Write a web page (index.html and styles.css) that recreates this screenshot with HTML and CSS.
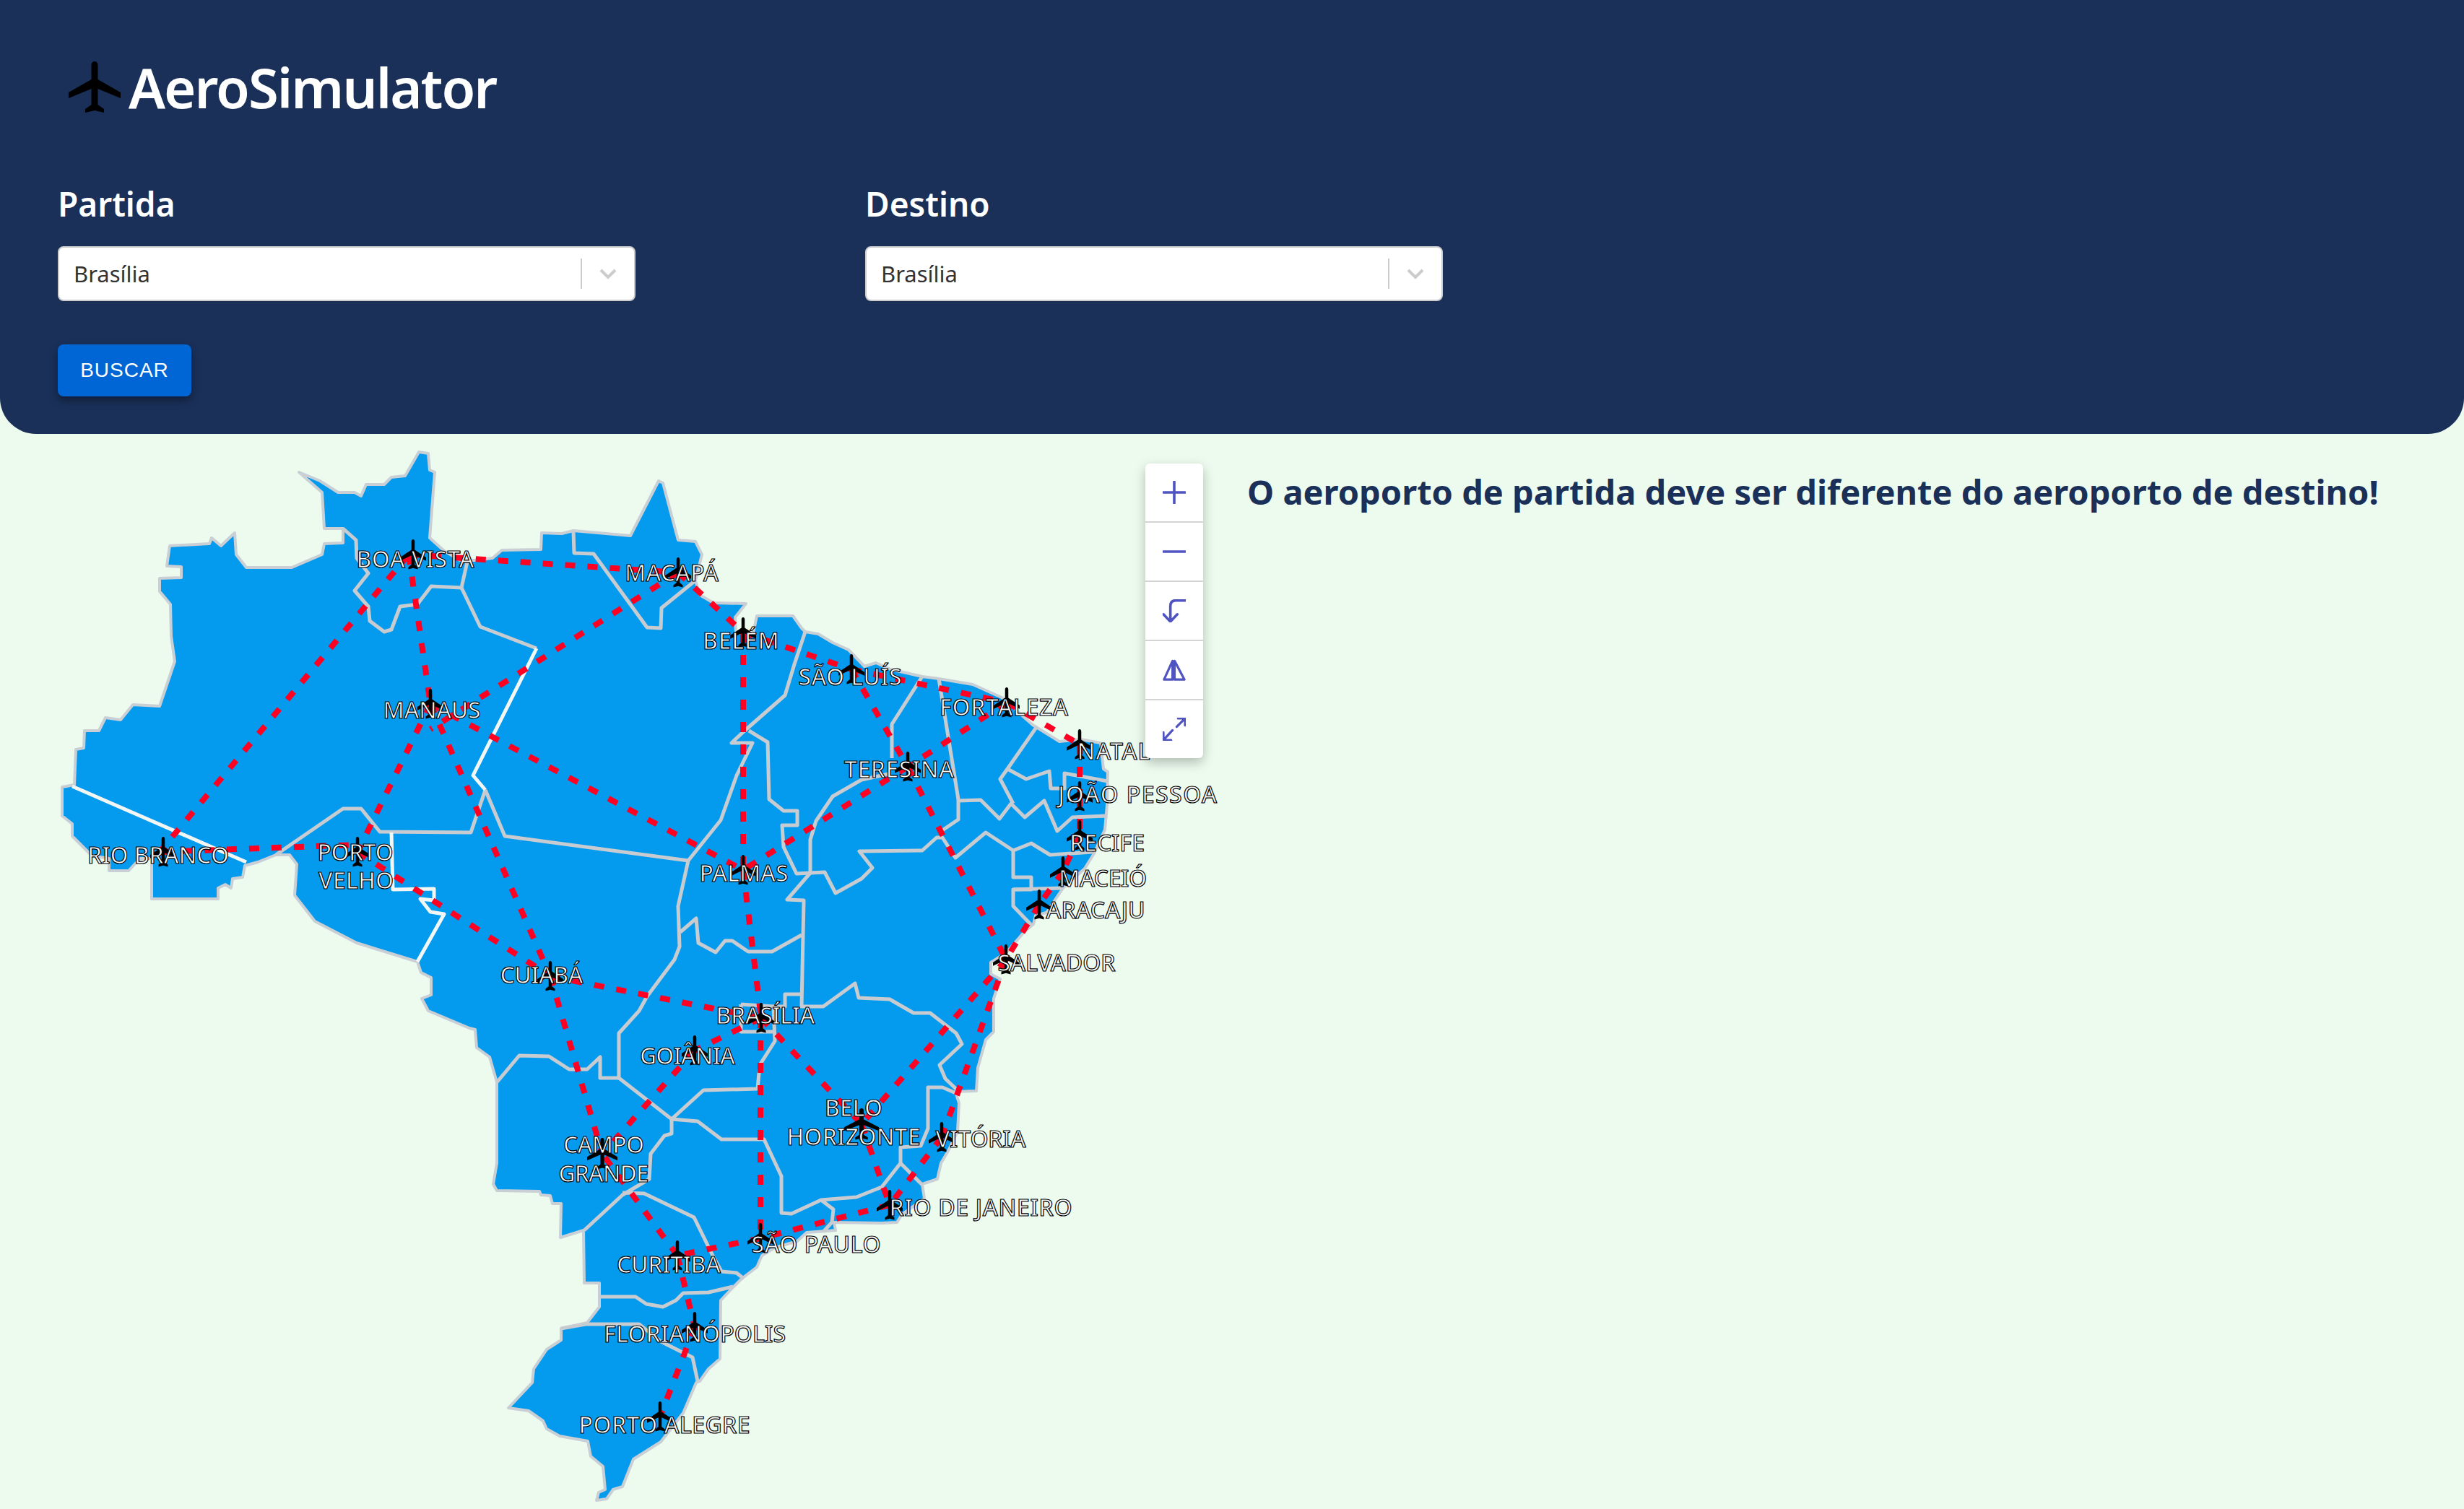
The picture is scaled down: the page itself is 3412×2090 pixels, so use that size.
FILE: index.html
```html
<!DOCTYPE html>
<html lang="pt-BR">

<head>
    <meta charset="UTF-8">
    <meta name="viewport" content="width=device-width, initial-scale=1.0">
    <title>AeroSimulator</title>
    <link rel="stylesheet" href="styles.css">
</head>

<body>

    <svg class="defs" aria-hidden="true">
        <symbol id="plane" viewBox="0 0 72 72" preserveAspectRatio="none">
            <path d="M36 0C38.5 0 40.5 2 40.5 5V25L72 43V51L40.5 38V60L49 66V71L36 68L23 71V66L31.5 60V38L0 51V43L31.5 25V5C31.5 2 33.5 0 36 0Z" />
        </symbol>
    </svg>

    <header class="topo">
        <div class="marca">
            <svg class="marca-icone"><use href="#plane" /></svg>
            <h1 class="marca-nome">AeroSimulator</h1>
        </div>

        <form class="rota">
            <div class="campo">
                <label class="campo-nome">Partida</label>
                <div class="select">
                    <span class="select-valor">Brasília</span>
                    <span class="select-seta">
                        <svg viewBox="0 0 24 16"><path d="M2 3L12 13L22 3" /></svg>
                    </span>
                </div>
            </div>
            <div class="campo">
                <label class="campo-nome">Destino</label>
                <div class="select">
                    <span class="select-valor">Brasília</span>
                    <span class="select-seta">
                        <svg viewBox="0 0 24 16"><path d="M2 3L12 13L22 3" /></svg>
                    </span>
                </div>
            </div>
        </form>

        <button class="buscar" type="button">BUSCAR</button>
    </header>

    <main class="conteudo">
        <div class="mapa">
            <svg class="mapa-svg" viewBox="0 601 1720 1489">
                <!-- contorno do pais -->
                <path class="pais" d="M414 654L443 666L468 682L491 682L500 687L507 671L532 671L542 661L561 659L580 626L593 628L595 651L602 654L595 745L615 763L637 776L660 776L682 773L695 762L749 761L750 738L778 739L794 735L873 742L912 666L918 669L939 748L963 750L972 768L963 804L969 824L988 835L1033 836L1018 855L1019 877L1043 877L1048 853L1098 853L1110 870L1115 875L1133 878L1153 890L1175 900L1197 923L1213 918L1233 927L1277 937L1300 940L1347 948L1387 966L1430 1004L1467 1027L1496 1024L1524 1029L1528 1065L1534 1069L1533 1115L1530 1149L1515 1182L1502 1203L1472 1230L1449 1264L1434 1268L1431 1280L1418 1291L1393 1320L1372 1333L1372 1349L1385 1356L1376 1383L1376 1429L1365 1440L1354 1479L1352 1511L1323 1512L1328 1528L1326 1567L1313 1594L1303 1611L1298 1633L1277 1640L1280 1660L1249 1682L1242 1693L1221 1694L1155 1693L1157 1704L1117 1707L1104 1719L1073 1728L1055 1739L1048 1755L1027 1771L1015 1783L998 1801L997 1882L981 1896L969 1913L964 1915L946 1957L915 1997L877 2021L862 2059L849 2063L840 2076L826 2078L829 2067L838 2063L835 2031L818 2017L814 1996L775 1989L757 1979L752 1968L732 1954L704 1950L737 1915L739 1896L757 1869L777 1856L777 1840L813 1832L830 1810L830 1777L809 1777L808 1704L776 1714L777 1667L765 1667L762 1656L749 1655L747 1650L688 1649L683 1640L688 1611L688 1499L678 1464L660 1451L658 1426L650 1424L593 1400L584 1383L597 1378L597 1354L583 1347L578 1332L494 1306L436 1276L408 1240L411 1197L401 1184L382 1184L357 1194L339 1199L336 1215L322 1217L320 1230L312 1225L302 1230L302 1245L210 1245L210 1189L194 1189L178 1206L151 1206L151 1189L127 1185L100 1158L100 1141L86 1130L86 1090L103 1087L105 1038L116 1036L117 1012L137 1012L146 994L167 997L184 976L221 978L242 916L237 881L236 837L221 819L221 801L251 800L251 785L231 784L235 756L290 753L293 745L306 756L325 738L327 768L341 786L404 786L446 768L449 753L475 752L475 732L449 732L446 682Z" />

                <!-- divisas dos estados -->
                <g class="divisas">
                    <path d="M475 732L493 748L494 773L510 794L491 818L510 840L512 860L532 875L542 872L554 840L578 837L597 812L639 814L647 778" />
                    <path d="M639 814L665 868L743 898" />
                    <path d="M672 1094L652 1153L526 1152L500 1120L475 1120L382 1184" />
                    <path d="M672 1094L699 1158L953 1192L998 1136L1020 1074L1042 1029L1013 1029L1030 1013L1087 963L1100 920L1115 875" />
                    <path d="M953 1192L939 1255L941 1311L934 1329L896 1380L885 1400L857 1431L857 1493L930 1550" />
                    <path d="M942 1291L964 1272L967 1306L991 1319L1004 1303L1014 1303L1036 1318L1069 1318L1110 1295" />
                    <path d="M794 735L795 766L822 767L896 869L915 870L916 842L963 804" />
                    <path d="M1037 1012L1063 1028L1065 1107L1085 1123L1104 1123L1104 1143L1083 1143L1085 1173L1103 1210L1122 1209" />
                    <path d="M1277 937L1235 1003L1235 1050M1230 1072L1193 1080L1153 1103L1130 1137L1122 1163L1122 1209" />
                    <path d="M1300 940L1327 1107L1327 1135L1302 1152" />
                    <path d="M1327 1109L1358 1108L1384 1134L1400 1113L1419 1132L1446 1109L1464 1151L1485 1132L1533 1130" />
                    <path d="M1436 1006L1395 1065L1385 1079L1403 1113" />
                    <path d="M1395 1065L1421 1079L1453 1068L1455 1092L1474 1092L1474 1071L1534 1082" />
                    <path d="M1122 1209L1142 1208L1157 1237L1193 1217L1208 1202L1190 1179L1277 1178L1297 1160L1305 1160L1323 1188L1365 1153L1403 1178L1428 1168L1454 1184L1513 1180" />
                    <path d="M1122 1209L1090 1246L1113 1247L1110 1394L1140 1394L1184 1362L1189 1382L1232 1384L1265 1403L1288 1403L1324 1431L1332 1446L1301 1475L1309 1494L1329 1513" />
                    <path d="M1403 1178L1403 1215L1428 1215L1428 1232L1403 1232L1403 1255L1428 1281" />
                    <path d="M1403 1232L1470 1230" />
                    <path d="M1110 1377L1087 1377L1087 1394L1071 1394L1073 1442L1052 1475L1049 1508L974 1510L930 1550" />
                    <path d="M1026 1391L1071 1394M1026 1391L1026 1429L1073 1429" />
                    <path d="M688 1499L719 1462L760 1463L788 1481L813 1481L831 1464L831 1493L857 1493" />
                    <path d="M930 1550L966 1553L999 1578L1058 1578L1082 1629L1082 1680L1096 1681L1137 1662L1186 1658L1221 1644L1247 1611L1247 1589L1275 1587L1285 1563L1285 1506L1305 1506L1326 1515" />
                    <path d="M1247 1611L1277 1641" />
                    <path d="M1137 1662L1154 1675L1152 1693L1140 1706" />
                    <path d="M930 1550L930 1570L920 1573L901 1598L899 1633L862 1655L809 1704" />
                    <path d="M862 1652L892 1653L961 1686L987 1739L999 1761L1020 1763L1030 1771" />
                    <path d="M830 1796L880 1796L895 1806L918 1810L936 1801L946 1791L981 1790L1015 1782" />
                    <path d="M777 1840L811 1834L885 1834L915 1858L959 1880L966 1913" />
                </g>
                <g class="divisas divisas-claras">
                    <path d="M100 1089L341 1194" />
                    <path d="M743 898L655 1074L672 1094" />
                    <path d="M542 1153L544 1232L601 1231L601 1247L582 1245L596 1263L615 1266L578 1332" />
                </g>

                <!-- voos -->
                <g class="voos">
                    <path d="M566 768L939 793" />
                    <path d="M566 768L221 1180" />
                    <path d="M566 768L596 975" />
                    <path d="M939 793L596 1010" />
                    <path d="M939 793L1029 876" />
                    <path d="M1029 876L1179 927" />
                    <path d="M1029 876L1029 1205" />
                    <path d="M1179 927L1394 973" />
                    <path d="M1179 927L1257 1062" />
                    <path d="M1394 973L1495 1031" />
                    <path d="M1394 973L1257 1062" />
                    <path d="M1495 1031L1495 1103" />
                    <path d="M1495 1103L1495 1157" />
                    <path d="M1495 1157L1472 1207" />
                    <path d="M1472 1207L1439 1253" />
                    <path d="M1439 1253L1393 1329" />
                    <path d="M1257 1062L1029 1205" />
                    <path d="M1257 1062L1393 1329" />
                    <path d="M596 975L1029 1205" />
                    <path d="M596 975L495 1180" />
                    <path d="M596 975L762 1352" />
                    <path d="M221 1180L495 1170" />
                    <path d="M495 1180L762 1352" />
                    <path d="M762 1352L1054 1410" />
                    <path d="M762 1352L834 1598" />
                    <path d="M1029 1205L1054 1410" />
                    <path d="M1054 1410L962 1455" />
                    <path d="M1054 1410L1193 1557" />
                    <path d="M1053 1410L1053 1715" />
                    <path d="M962 1455L834 1598" />
                    <path d="M1393 1329L1193 1557" />
                    <path d="M1393 1329L1304 1575" />
                    <path d="M1304 1575L1232 1669" />
                    <path d="M1193 1557L1232 1669" />
                    <path d="M1232 1669L1053 1715" />
                    <path d="M1053 1715L938 1739" />
                    <path d="M938 1739L834 1598" />
                    <path d="M938 1739L962 1838" />
                    <path d="M962 1838L914 1962" />
                </g>

                <!-- aeroportos -->
                <use href="#plane" x="554" y="747" width="36" height="42" />
                <use href="#plane" x="921" y="772" width="36" height="42" />
                <use href="#plane" x="1011" y="855" width="36" height="42" />
                <use href="#plane" x="1161" y="906" width="36" height="42" />
                <use href="#plane" x="1376" y="952" width="36" height="42" />
                <use href="#plane" x="1477" y="1010" width="36" height="42" />
                <use href="#plane" x="1239" y="1041" width="36" height="42" />
                <use href="#plane" x="1477" y="1082" width="36" height="42" />
                <use href="#plane" x="1477" y="1136" width="36" height="42" />
                <use href="#plane" x="1454" y="1186" width="36" height="42" />
                <use href="#plane" x="1421" y="1232" width="36" height="42" />
                <use href="#plane" x="1375" y="1308" width="36" height="42" />
                <use href="#plane" x="578" y="954" width="36" height="42" />
                <use href="#plane" x="208" y="1159" width="36" height="42" />
                <use href="#plane" x="477" y="1159" width="36" height="42" />
                <use href="#plane" x="744" y="1331" width="36" height="42" />
                <use href="#plane" x="1011" y="1184" width="36" height="42" />
                <use href="#plane" x="1036" y="1389" width="36" height="42" />
                <use href="#plane" x="944" y="1434" width="36" height="42" />
                <use href="#plane" x="1169" y="1535" width="48" height="44" />
                <use href="#plane" x="1286" y="1554" width="36" height="42" />
                <use href="#plane" x="813" y="1576" width="42" height="44" />
                <use href="#plane" x="1214" y="1648" width="36" height="42" />
                <use href="#plane" x="1035" y="1694" width="36" height="42" />
                <use href="#plane" x="920" y="1718" width="36" height="42" />
                <use href="#plane" x="944" y="1817" width="36" height="42" />
                <use href="#plane" x="896" y="1941" width="36" height="42" />

                <!-- nomes das cidades -->
                <g class="cidades">
                    <text x="575" y="786" textLength="163">BOA VISTA</text>
                    <text x="930" y="805" textLength="130">MACAPÁ</text>
                    <text x="1026" y="899" textLength="106">BELÉM</text>
                    <text x="1177" y="949" textLength="143">SÃO LUÍS</text>
                    <text x="1390" y="991" textLength="178">FORTALEZA</text>
                    <text x="1542" y="1052" textLength="101">NATAL</text>
                    <text x="1245" y="1077" textLength="152">TERESINA</text>
                    <text x="1575" y="1112" textLength="220">JOÃO PESSOA</text>
                    <text x="1533" y="1179" textLength="104">RECIFE</text>
                    <text x="1527" y="1228" textLength="122">MACEIÓ</text>
                    <text x="1517" y="1272" textLength="137">ARACAJU</text>
                    <text x="1463" y="1345" textLength="163">SALVADOR</text>
                    <text x="1358" y="1589" textLength="125">VITÓRIA</text>
                    <text x="1358" y="1684" textLength="253">RIO DE JANEIRO</text>
                    <text x="1130" y="1735" textLength="179">SÃO PAULO</text>
                    <text x="926" y="1763" textLength="144">CURITIBA</text>
                    <text x="962" y="1859" textLength="252">FLORIANÓPOLIS</text>
                    <text x="920" y="1985" textLength="237">PORTO ALEGRE</text>
                    <text x="836" y="1597" textLength="112">CAMPO</text>
                    <text x="836" y="1637" textLength="125">GRANDE</text>
                    <text x="952" y="1474" textLength="132">GOIÂNIA</text>
                    <text x="1060" y="1418" textLength="137">BRASÍLIA</text>
                    <text x="1182" y="1546" textLength="80">BELO</text>
                    <text x="1182" y="1586" textLength="185">HORIZONTE</text>
                    <text x="598" y="995" textLength="135">MANAUS</text>
                    <text x="219" y="1196" textLength="196">RIO BRANCO</text>
                    <text x="492" y="1192" textLength="105">PORTO</text>
                    <text x="493" y="1231" textLength="104">VELHO</text>
                    <text x="750" y="1362" textLength="115">CUIABÁ</text>
                    <text x="1030" y="1221" textLength="123">PALMAS</text>
                </g>
            </svg>

            <div class="zoom">
                <button class="zoom-botao" type="button">
                    <svg viewBox="0 0 30 30"><path d="M15 1V29M1 15H29" /></svg>
                </button>
                <button class="zoom-botao" type="button">
                    <svg viewBox="0 0 30 30"><path d="M1 15H29" /></svg>
                </button>
                <button class="zoom-botao" type="button">
                    <svg viewBox="0 0 30 30"><path d="M29 1.5H17Q10 1.5 10 9V29M1 19.5L10 29L19 19.5" /></svg>
                </button>
                <button class="zoom-botao" type="button">
                    <svg viewBox="0 0 34 31"><path d="M14.5 2L2 29.5H14.5ZM17.5 2L32 29.5H17.5Z" /></svg>
                </button>
                <button class="zoom-botao" type="button">
                    <svg viewBox="0 0 33 33"><path d="M20 13L32 1M22 1H32V11M1 32L14 18M1 21V32H12" /></svg>
                </button>
            </div>
        </div>

        <p class="aviso">O aeroporto de partida deve ser diferente do aeroporto de destino!</p>
    </main>

</body>

</html>
```

FILE: styles.css
```css
* {
    box-sizing: border-box;
}

body {
    margin: 0;
    background-color: #ecfbee;
    font-family: "Noto Sans", "Open Sans", sans-serif;
    color: #1a3059;
    overflow: hidden;
}

.defs {
    display: none;
}

.topo {
    height: 601px;
    padding: 85px 80px 0;
    background-color: #1a3059;
    border-radius: 0 0 50px 50px;
    color: white;
}

.marca {
    display: flex;
    align-items: center;
    gap: 11px;
    height: 72px;
    margin-left: 15px;
}

.marca-icone {
    width: 72px;
    height: 72px;
    fill: black;
}

.marca-nome {
    margin: 0;
    font-size: 76px;
    font-weight: 600;
    line-height: 72px;
    letter-spacing: -2px;
}

.rota {
    display: flex;
    gap: 318px;
    margin-top: 94px;
}

.campo {
    width: 800px;
}

.campo-nome {
    display: block;
    height: 90px;
    font-size: 46px;
    font-weight: 600;
    line-height: 62px;
}

.select {
    display: flex;
    align-items: center;
    height: 76px;
    padding-left: 20px;
    background-color: white;
    border: 2px solid #ccc;
    border-radius: 8px;
    color: #333;
    font-size: 31px;
}

.select-valor {
    flex: 1;
}

.select-seta {
    display: flex;
    align-items: center;
    justify-content: center;
    width: 74px;
    height: 42px;
    border-left: 2px solid #ccc;
}

.select-seta svg {
    width: 24px;
    height: 16px;
    fill: none;
    stroke: #ccc;
    stroke-width: 4;
}

.buscar {
    display: block;
    width: 185px;
    height: 72px;
    margin-top: 60px;
    background-color: #0066d6;
    border: 0;
    border-radius: 8px;
    box-shadow: 0 6px 12px rgba(0, 0, 0, 0.35);
    color: white;
    font-family: "Liberation Sans", Arial, sans-serif;
    font-size: 28px;
    letter-spacing: 1px;
}

.conteudo {
    display: flex;
    gap: 7px;
}

.mapa {
    position: relative;
    flex: none;
    width: 1720px;
    height: 1489px;
}

.mapa-svg {
    display: block;
    width: 1720px;
    height: 1489px;
}

.pais {
    fill: #049bef;
    stroke: #c9cfd4;
    stroke-width: 4;
    stroke-linejoin: round;
}

.divisas {
    fill: none;
    stroke: #c8ccd0;
    stroke-width: 5;
    stroke-linejoin: round;
}

.divisas-claras {
    stroke: #f2f7f6;
}

.voos {
    fill: none;
    stroke: #ff0022;
    stroke-width: 8;
    stroke-dasharray: 14 17;
}

.cidades {
    fill: white;
    stroke: black;
    stroke-width: 1.2px;
    font-size: 32px;
    font-weight: 500;
    text-anchor: middle;
}

.zoom {
    position: absolute;
    top: 41px;
    left: 1586px;
    width: 80px;
    background-color: white;
    border-radius: 6px;
    box-shadow: 0 6px 16px rgba(0, 0, 0, 0.25);
}

.zoom-botao {
    display: flex;
    align-items: center;
    justify-content: center;
    width: 80px;
    height: 82px;
    padding: 0;
    background: none;
    border: 0;
    border-bottom: 2px solid #d4d4d4;
}

.zoom-botao:last-child {
    height: 80px;
    border-bottom: 0;
}

.zoom-botao svg {
    width: 32px;
    height: 32px;
    fill: none;
    stroke: #5054c2;
    stroke-width: 3.4;
    stroke-linecap: round;
    stroke-linejoin: round;
}

.aviso {
    margin: 52px 0 0;
    font-size: 47px;
    font-weight: 700;
    line-height: 56px;
    white-space: nowrap;
}
```
